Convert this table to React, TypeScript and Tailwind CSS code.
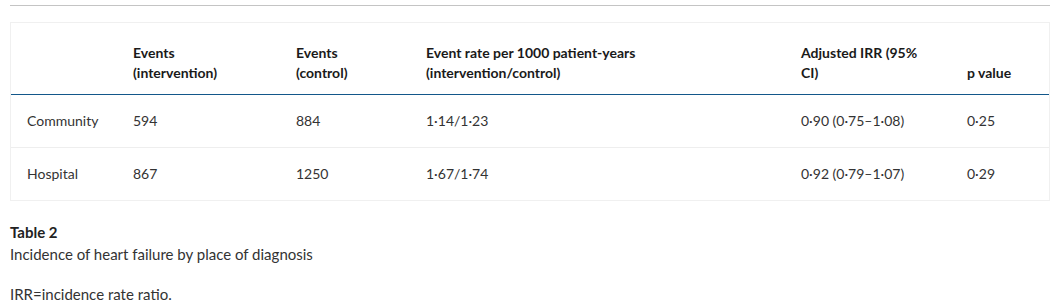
import React from "react";

const rows = [
  ["Community", "594", "884", "1·14/1·23", "0·90 (0·75–1·08)", "0·25"],
  ["Hospital", "867", "1250", "1·67/1·74", "0·92 (0·79–1·07)", "0·29"],
];

const widths = ["w-[106px]", "w-[163px]", "w-[130px]", "w-[375px]", "w-[166px]", "w-[98px]"];

const headers: React.ReactNode[] = [
  "",
  <>Events<br />(intervention)</>,
  <>Events<br />(control)</>,
  <>Event rate per 1000 patient-years<br />(intervention/control)</>,
  <>Adjusted IRR (95%<br />CI)</>,
  "p value",
];

export default function App() {
  return (
    <div
      className="bg-white text-[#333] w-[1063px] h-[307px] overflow-hidden px-[10px] pt-[5px]"
      style={{ fontFamily: "Lato, 'Noto Sans', sans-serif" }}
    >
      <div className="w-[1040px] border-t border-[#c4c4c4]" />
      <div className="mt-[16px] w-[1040px] border border-[#f0f0f0] text-[14px] leading-[20px]">
        <div className="flex h-[72px] items-end border-b border-[#13578a] pb-[11px] font-bold text-[#1a1a1a]">
          {headers.map((h, j) => (
            <div key={j} className={`${widths[j]} shrink-0 px-[16px]`}>{h}</div>
          ))}
        </div>
        {rows.map((r, i) => (
          <div key={i} className={`flex items-center ${i === 0 ? "h-[53px] border-b border-[#eeeeee]" : "h-[52px]"}`}>
            {r.map((c, j) => (
              <div key={j} className={`${widths[j]} shrink-0 px-[16px]`}>{c}</div>
            ))}
          </div>
        ))}
      </div>
      <div className="mt-[20px] text-[15px] leading-[22px] font-bold text-[#222]">Table 2</div>
      <div className="text-[15px] leading-[22px] text-[#333]">Incidence of heart failure by place of diagnosis</div>
      <div className="mt-[18px] text-[15px] leading-[22px] text-[#333]">IRR=incidence rate ratio.</div>
    </div>
  );
}
